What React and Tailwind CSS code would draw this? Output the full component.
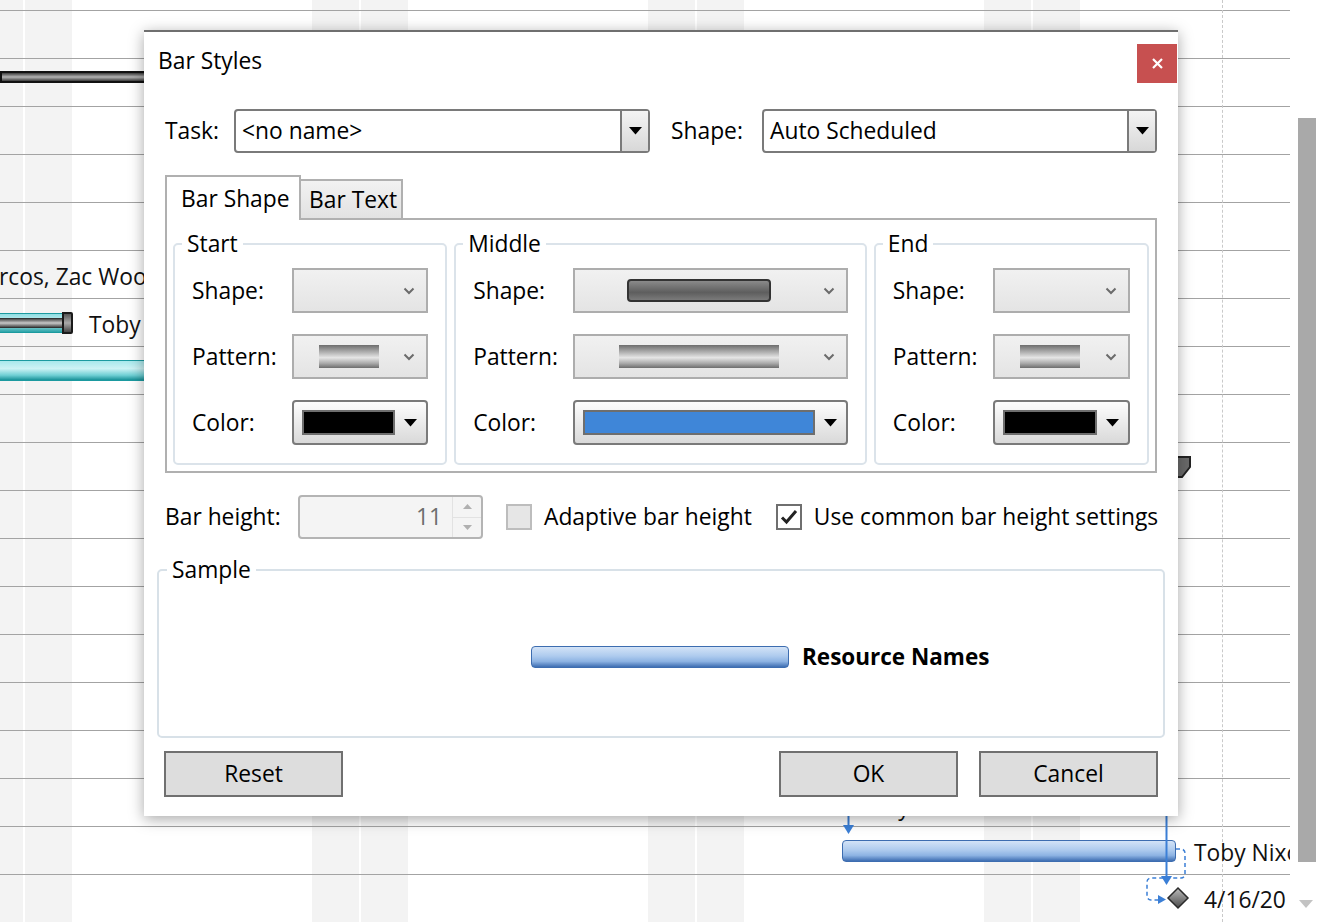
import React from "react";

// Small glyphs used by the combo boxes
const Caret = () => (
    <svg width="13" height="8" viewBox="0 0 13 8">
        <path d="M0 0h13L6.5 7.5z" fill="#000" />
    </svg>
);

const Chevron = () => (
    <svg width="12" height="8" viewBox="0 0 12 8">
        <path d="M1.5 1.5L6 6l4.5-4.5" fill="none" stroke="#6b6b6b" strokeWidth="2" />
    </svg>
);

// Grey picker (Shape / Pattern)
const PickBox = ({ children }) => (
    <div className="flex h-[45px] items-center border-2 border-[#adadad] bg-linear-to-b from-[#f1f1f1] to-[#e4e4e4] pr-[11px]">
        <div className="flex flex-1 justify-center">{children}</div>
        <Chevron />
    </div>
);

// Colour picker with swatch
const ColorBox = ({ swatch }) => (
    <div className="flex h-[45px] items-center rounded-[4px] border-2 border-[#7a7a7a] bg-linear-to-b from-[#fdfdfd] to-[#d9d9d9] pl-[8px] pr-[9px]">
        <div className={"h-[25px] flex-1 border-2 border-[#6e6e6e] " + swatch} />
        <div className="ml-[9px] flex">
            <Caret />
        </div>
    </div>
);

const PatternBar = ({ w }) => (
    <div className={"h-[23px] bg-[linear-gradient(to_bottom,#6d6d6d_0%,#b9b9b9_35%,#e6e6e6_55%,#a9a9a9_80%,#6d6d6d_100%)] " + w} />
);

const Group = ({ title, w, shape, pattern, swatch }) => (
    <fieldset className={"rounded-[5px] border-2 border-[#dbe3ea] px-[17px] pb-[18px] " + w}>
        <legend className="ml-[-10px] px-[5px] leading-[30px]">{title}</legend>
        <div className="mt-[9px] grid grid-cols-[100px_1fr] items-center gap-y-[21px]">
            <span>Shape:</span>
            <PickBox>{shape}</PickBox>
            <span>Pattern:</span>
            <PickBox>{pattern}</PickBox>
            <span>Color:</span>
            <ColorBox swatch={swatch} />
        </div>
    </fieldset>
);

const Combo = ({ value, className }) => (
    <div className={"flex h-[44px] rounded-[4px] border-2 border-[#7a7a7a] " + className}>
        <div className="flex flex-1 items-center pl-[6px]">{value}</div>
        <div className="flex w-[28px] items-center justify-center border-l-2 border-[#7a7a7a] bg-linear-to-b from-[#f4f4f4] to-[#d8d8d8]">
            <Caret />
        </div>
    </div>
);

const Button = ({ label }) => (
    <button className="flex h-[46px] w-[179px] items-center justify-center border-2 border-[#707070] bg-[#dddddd]">
        {label}
    </button>
);

// The gantt chart lying under the dialog
const GanttBackground = () => (
    <>
        {/* weekend columns */}
        <div className="absolute inset-0 ml-[-24px] flex">
            {[0, 1, 2, 3].map((i) => (
                <div key={i} className="flex shrink-0">
                    <div className="w-[47px] bg-[#f3f3f3]" />
                    <div className="w-[2px]" />
                    <div className="w-[47px] bg-[#f3f3f3]" />
                    <div className="w-[240px]" />
                </div>
            ))}
        </div>

        {/* row lines */}
        <div className="absolute left-0 top-0 flex w-[1290px] flex-col pt-[10px]">
            {Array.from({ length: 19 }).map((_, i) => (
                <div key={i} className="h-[48px] border-t border-[#a3a3a3]" />
            ))}
        </div>

        {/* status date */}
        <div className="absolute bottom-0 left-[1222px] top-0 border-l border-dashed border-[#c9c9c9]" />

        {/* tasks */}
        <div className="absolute left-0 top-0 h-[922px] w-[1290px] overflow-hidden text-[#111]">
            <div className="absolute left-0 top-[71px] h-[12px] w-[150px] border-2 border-[#111] bg-[linear-gradient(to_bottom,#3c3c3c_0%,#b4b4b4_50%,#3c3c3c_100%)]" />

            <div className="absolute left-[-1px] top-[262px] leading-[30px]">rcos, Zac Wood</div>

            <div className="absolute left-0 top-[313px] h-[20px] w-[64px] border-y border-[#1b9a9f] bg-[linear-gradient(to_bottom,#8fdde2,#c9f1f3_45%,#2aa3a8)]">
                <div className="mt-[4px] h-[10px] w-full border-y border-[#333] bg-[linear-gradient(to_bottom,#4a4a4a,#c8c8c8_50%,#4a4a4a)]" />
            </div>
            <div className="absolute left-[62px] top-[312px] h-[22px] w-[11px] rounded-r-[2px] border-2 border-[#1a1a1a] bg-[linear-gradient(to_bottom,#555,#aaa_50%,#444)]" />
            <div className="absolute left-[89px] top-[310px] leading-[30px]">Toby Nixon</div>

            <div className="absolute left-0 top-[360px] h-[21px] w-[150px] border-y border-[#1b9aa0] bg-[linear-gradient(to_bottom,#a8e8ec,#cdf3f5_40%,#6fcfd4_75%,#1a9299)]" />

            <svg className="absolute left-[1172px] top-[455px]" width="20" height="24" viewBox="0 0 20 24">
                <path d="M2 2h16v10l-8 10H2z" fill="#6a6a6a" stroke="#222" strokeWidth="2" />
            </svg>

            <div className="absolute left-[858px] top-[792px] leading-[30px]">Toby Nixon</div>

            <div className="absolute left-[842px] top-[840px] h-[22px] w-[334px] rounded-[4px] border border-[#3d6db0] bg-[linear-gradient(to_bottom,#d3e3f7_0%,#aecbee_45%,#8db3e3_72%,#3e6eb2_100%)]" />
            <div className="absolute left-[1194px] top-[838px] whitespace-nowrap leading-[30px]">Toby Nixon</div>

            <svg className="absolute left-[830px] top-[810px]" width="380" height="112" viewBox="830 810 380 112">
                <path d="M848.5 810v16" stroke="#3b7fd6" strokeWidth="2" />
                <path d="M843 825h11l-5.5 9z" fill="#3b7fd6" />
                <path d="M1166.5 810v67" stroke="#3b7fd6" strokeWidth="2" />
                <path d="M1161 876h11l-5.5 9z" fill="#3b7fd6" />
                <path d="M1176 849h5a4 4 0 0 1 4 4v21a4 4 0 0 1-4 4h-30a4 4 0 0 0-4 4v14a4 4 0 0 0 4 4h8" fill="none" stroke="#3b7fd6" strokeWidth="1.5" strokeDasharray="4 3" />
                <path d="M1158 895l8 4.5-8 4.5z" fill="#3b7fd6" />
                <defs>
                    <linearGradient id="dia" x1="0" y1="0" x2="0" y2="1">
                        <stop offset="0" stopColor="#bdbdbd" />
                        <stop offset="1" stopColor="#4a4a4a" />
                    </linearGradient>
                </defs>
                <path d="M1178 888l10 10-10 10-10-10z" fill="url(#dia)" stroke="#2b2b2b" strokeWidth="1.5" />
            </svg>
            <div className="absolute left-[1204px] top-[885px] leading-[30px]">4/16/20</div>
        </div>

        {/* scroll bar */}
        <div className="absolute left-[1298px] top-[118px] h-[744px] w-[18px] bg-[#a9a9a9]" />
        <svg className="absolute left-[1299px] top-[900px]" width="14" height="9" viewBox="0 0 14 9">
            <path d="M0 0h14L7 8z" fill="#c3c3c3" />
        </svg>
    </>
);

const BarStylesDialog = () => (
    <div className="absolute left-[144px] top-[30px] flex h-[786px] w-[1034px] flex-col border-t-2 border-[#6f6f6f] bg-white shadow-[0_3px_14px_rgba(0,0,0,0.35)]">
        {/* title */}
        <div className="flex h-[77px] items-start justify-between">
            <span className="ml-[14px] mt-[14px] leading-[30px]">Bar Styles</span>
            <button className="mr-[1px] mt-[12px] flex h-[39px] w-[40px] items-center justify-center bg-[#c75050]">
                <svg width="11" height="11" viewBox="0 0 11 11">
                    <path d="M1 1l9 9M10 1l-9 9" stroke="#fff" strokeWidth="2.2" />
                </svg>
            </button>
        </div>

        {/* task / shape */}
        <div className="flex items-center px-[21px]">
            <span className="w-[69px]">Task:</span>
            <Combo value="<no name>" className="w-[416px]" />
            <span className="ml-[21px] w-[91px]">Shape:</span>
            <Combo value="Auto Scheduled" className="flex-1" />
        </div>

        {/* tabs */}
        <div className="mt-[22px] flex items-end px-[21px]">
            <div className="relative z-10 flex h-[45px] w-[136px] items-center border-2 border-b-0 border-[#b0b0b0] bg-white pl-[14px]">
                Bar Shape
            </div>
            <div className="mb-[2px] flex h-[39px] w-[102px] items-center whitespace-nowrap border-2 border-b-0 border-l-0 border-[#b0b0b0] bg-linear-to-b from-[#f2f2f2] to-[#e2e2e2] pl-[8px]">
                Bar Text
            </div>
        </div>
        <div className="mx-[21px] -mt-[2px] flex gap-[7px] border-2 border-[#b0b0b0] px-[6px] pb-[6px] pt-[9px]">
            <Group title="Start" w="w-[275px]" shape={null} pattern={<PatternBar w="w-[60px]" />} swatch="bg-black" />
            <Group
                title="Middle"
                w="w-[414px]"
                shape={<div className="h-[23px] w-[144px] rounded-[4px] border-2 border-[#333] bg-[linear-gradient(to_bottom,#8a8a8a,#5e5e5e_60%,#7a7a7a)]" />}
                pattern={<PatternBar w="w-[160px]" />}
                swatch="bg-[#3f86d8]"
            />
            <Group title="End" w="w-[276px]" shape={null} pattern={<PatternBar w="w-[60px]" />} swatch="bg-black" />
        </div>

        {/* bar height */}
        <div className="mt-[22px] flex items-center whitespace-nowrap px-[21px]">
            <span className="w-[133px] shrink-0">Bar height:</span>
            <div className="flex h-[44px] w-[185px] shrink-0 rounded-[4px] border-2 border-[#b4b4b4] bg-[#f4f4f4]">
                <div className="flex flex-1 items-center justify-end pr-[10px] text-[#6d6d6d]">11</div>
                <div className="flex w-[29px] flex-col border-l border-[#e2e2e2]">
                    <div className="flex flex-1 items-center justify-center border-b border-[#e2e2e2]">
                        <svg width="9" height="5" viewBox="0 0 9 5">
                            <path d="M0 5h9L4.5 0z" fill="#b0b0b0" />
                        </svg>
                    </div>
                    <div className="flex flex-1 items-center justify-center">
                        <svg width="9" height="5" viewBox="0 0 9 5">
                            <path d="M0 0h9L4.5 5z" fill="#b0b0b0" />
                        </svg>
                    </div>
                </div>
            </div>
            <div className="ml-[23px] h-[26px] w-[26px] shrink-0 border-2 border-[#bdbdbd] bg-[#e6e6e6]" />
            <span className="ml-[12px] shrink-0">Adaptive bar height</span>
            <div className="ml-[24px] flex h-[26px] w-[26px] shrink-0 items-center justify-center border-2 border-[#6f6f6f] bg-white">
                <svg width="18" height="16" viewBox="0 0 18 16">
                    <path d="M2 8.5l4.5 4.5L16 2" fill="none" stroke="#222" strokeWidth="3" />
                </svg>
            </div>
            <span className="ml-[12px] shrink-0">Use common bar height settings</span>
        </div>

        {/* sample */}
        <fieldset className="mx-[13px] mt-[16px] h-[183px] rounded-[5px] border-2 border-[#d8e1e8]">
            <legend className="ml-[8px] px-[5px] leading-[30px]">Sample</legend>
            <div className="flex h-[144px] items-center pl-[372px]">
                <div className="h-[22px] w-[258px] rounded-[4px] border border-[#3d6db0] bg-[linear-gradient(to_bottom,#d3e3f7_0%,#aecbee_45%,#8db3e3_72%,#3e6eb2_100%)]" />
                <span className="ml-[13px] text-[22.5px] font-bold">Resource Names</span>
            </div>
        </fieldset>

        {/* buttons */}
        <div className="mt-[13px] flex px-[20px]">
            <Button label="Reset" />
            <div className="flex-1" />
            <Button label="OK" />
            <div className="ml-[21px]">
                <Button label="Cancel" />
            </div>
        </div>
    </div>
);

export default function App() {
    return (
        <div className="relative h-[922px] w-[1320px] overflow-hidden bg-white font-['Open_Sans',sans-serif] text-[22.8px] leading-[30px] text-black">
            <GanttBackground />
            <BarStylesDialog />
        </div>
    );
}
